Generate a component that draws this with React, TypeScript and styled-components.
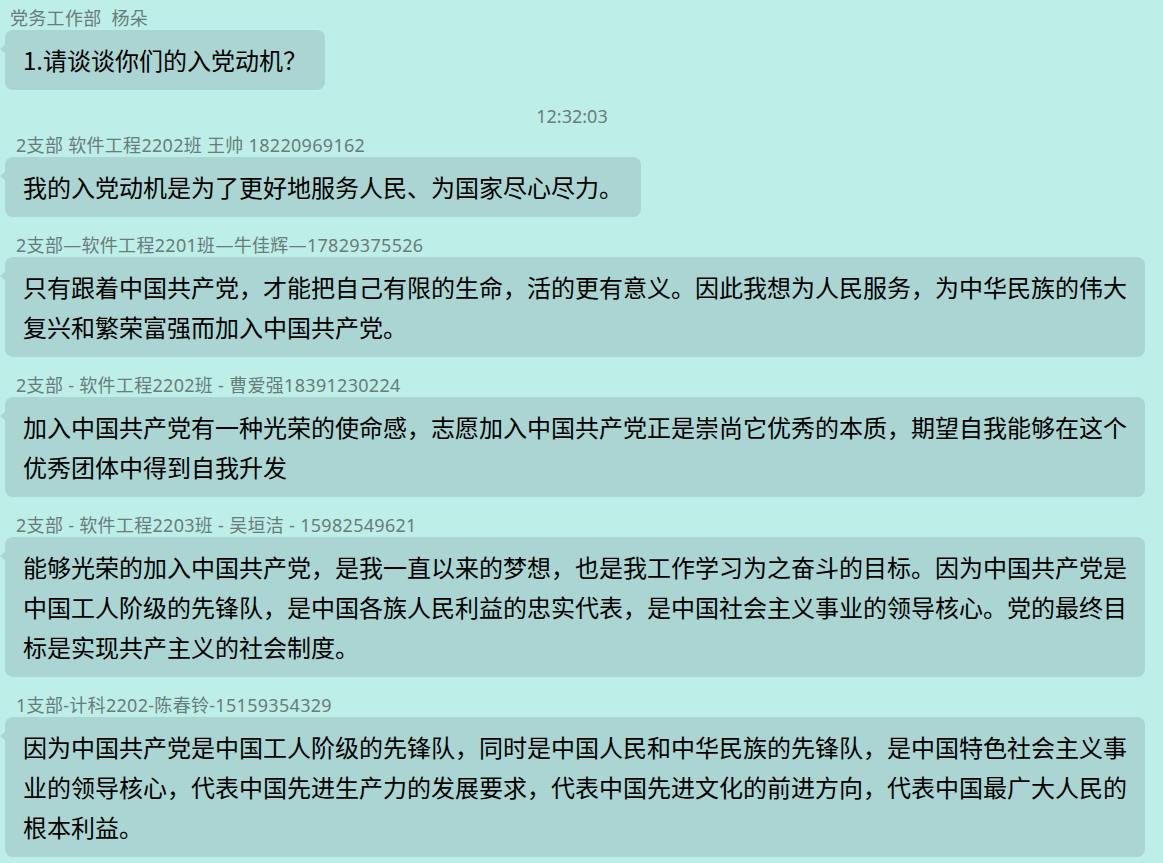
import styled, { createGlobalStyle } from "styled-components";

const GlobalStyle = createGlobalStyle`
  html, body {
    margin: 0;
    padding: 0;
    background: #bdeee8;
  }
  body {
    font-family: "Noto Sans CJK SC", "Liberation Sans", sans-serif;
  }
`;

const Chat = styled.div`
  display: flex;
  flex-direction: column;
  width: 1145px;
  min-height: 863px;
  padding: 6px 0 0 5px;
  box-sizing: border-box;
  background: #bdeee8;
`;

const Entry = styled.div<{ $gap: number }>`
  display: flex;
  flex-direction: column;
  align-items: flex-start;
  margin-top: ${(p) => p.$gap}px;
`;

const Sender = styled.div<{ $indent: number }>`
  height: 24px;
  line-height: 24px;
  padding-left: ${(p) => p.$indent}px;
  font-family: "Noto Sans", "Noto Sans CJK SC", sans-serif;
  font-size: 18px;
  letter-spacing: 0.3px;
  color: #6a7c7a;
  white-space: pre;
`;

const Bubble = styled.div`
  position: relative;
  max-width: 1140px;
  box-sizing: border-box;
  padding: 10px 18px;
  background: #abd5d2;
  border-radius: 8px;
  font-size: 24px;
  line-height: 40px;
  color: #000;
  line-break: strict;

  &::before {
    content: "";
    position: absolute;
    left: -5px;
    top: 15px;
    border-style: solid;
    border-width: 4px 5px 4px 0;
    border-color: transparent #abd5d2 transparent transparent;
  }
`;

const Time = styled.div`
  width: 1134px;
  margin-top: 14px;
  height: 24px;
  line-height: 24px;
  text-align: center;
  font-family: "Noto Sans", "Noto Sans CJK SC", sans-serif;
  font-size: 18px;
  color: #6a7c7a;
`;

type Msg = { name: string; text: string; indent: number; gap: number };

const first: Msg = {
  name: "党务工作部  杨朵",
  text: "1.请谈谈你们的入党动机？",
  indent: 5,
  gap: 0,
};

const replies: Msg[] = [
  {
    name: "2支部 软件工程2202班 王帅 18220969162",
    text: "我的入党动机是为了更好地服务人民、为国家尽心尽力。",
    indent: 11,
    gap: 5,
  },
  {
    name: "2支部—软件工程2201班—牛佳辉—17829375526",
    text: "只有跟着中国共产党，才能把自己有限的生命，活的更有意义。因此我想为人民服务，为中华民族的伟大复兴和繁荣富强而加入中国共产党。",
    indent: 11,
    gap: 16,
  },
  {
    name: "2支部 - 软件工程2202班 - 曹爱强18391230224",
    text: "加入中国共产党有一种光荣的使命感，志愿加入中国共产党正是崇尚它优秀的本质，期望自我能够在这个优秀团体中得到自我升发",
    indent: 11,
    gap: 16,
  },
  {
    name: "2支部 - 软件工程2203班 - 吴垣洁 - 15982549621",
    text: "能够光荣的加入中国共产党，是我一直以来的梦想，也是我工作学习为之奋斗的目标。因为中国共产党是中国工人阶级的先锋队，是中国各族人民利益的忠实代表，是中国社会主义事业的领导核心。党的最终目标是实现共产主义的社会制度。",
    indent: 11,
    gap: 16,
  },
  {
    name: "1支部-计科2202-陈春铃-15159354329",
    text: "因为中国共产党是中国工人阶级的先锋队，同时是中国人民和中华民族的先锋队，是中国特色社会主义事业的领导核心，代表中国先进生产力的发展要求，代表中国先进文化的前进方向，代表中国最广大人民的根本利益。",
    indent: 11,
    gap: 16,
  },
];

function Message({ msg }: { msg: Msg }) {
  return (
    <Entry $gap={msg.gap}>
      <Sender $indent={msg.indent}>{msg.name}</Sender>
      <Bubble>{msg.text}</Bubble>
    </Entry>
  );
}

function App() {
  return (
    <>
      <GlobalStyle />
      <Chat>
        <Message msg={first} />
        <Time>12:32:03</Time>
        {replies.map((m) => (
          <Message key={m.name} msg={m} />
        ))}
      </Chat>
    </>
  );
}

export default App;
